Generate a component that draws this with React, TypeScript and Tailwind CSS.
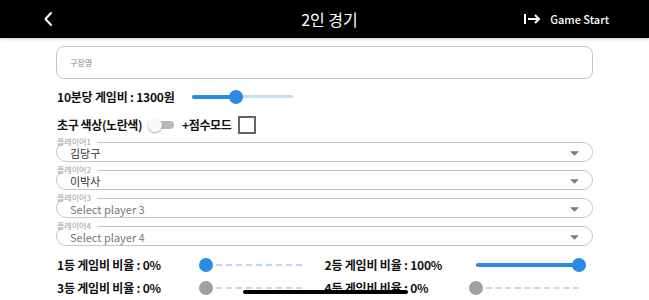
import React from 'react';

const font = { fontFamily: '"Noto Sans CJK KR", "Noto Sans", Roboto, sans-serif' };

function Slider({ value, color, track, fill }: { value: number; color: string; track: string; fill: string }) {
  return (
    <div className="relative h-[14px] w-full">
      <div className={`absolute left-[7px] right-[7px] top-[6px] border-t-2 border-dashed ${track}`} />
      <div className={`absolute left-[7px] top-[5px] h-[4px] rounded-full ${fill}`} style={{ width: `calc((100% - 14px) * ${value})` }} />
      <div className={`absolute top-0 h-[14px] w-[14px] rounded-full ${color}`} style={{ left: `calc((100% - 14px) * ${value})` }} />
    </div>
  );
}

function PlayerSelect({ label, value, placeholder }: { label: string; value: string; placeholder?: boolean }) {
  return (
    <fieldset className="rounded-[10px] border border-[#c4c4c4] pb-[1px]">
      <legend className="pr-[6px] text-[8px] leading-[8px] text-[#9a9a9a]">{label}</legend>
      <div className="mt-[1px] flex h-[13px] items-center justify-between px-[13px]">
        <span className={`text-[11px] leading-[13px] ${placeholder ? 'text-[#777]' : 'text-[#333]'}`}>{value}</span>
        <svg width="9" height="5" viewBox="0 0 10 5"><path d="M0 0 L10 0 L5 5 Z" fill="#7a7a7a" /></svg>
      </div>
    </fieldset>
  );
}

export default function App() {
  return (
    <div className="relative h-[300px] w-[649px] overflow-hidden bg-white" style={font}>
      <header className="grid h-[38px] grid-cols-[1fr_auto_1fr] items-center bg-black pl-[44px] pr-[40px] text-white shadow-[0_1px_3px_rgba(0,0,0,0.2)]">
        <svg width="9" height="16" viewBox="0 0 9 16" fill="none" stroke="white" strokeWidth="2" strokeLinecap="round" strokeLinejoin="round">
          <path d="M7 2 L1.5 8 L7 14" />
        </svg>
        <h1 className="ml-[6px] text-[16px] font-normal">2인 경기</h1>
        <div className="flex items-center justify-end gap-[9px]">
          <svg width="17" height="12" viewBox="0 0 17 12" fill="none" stroke="white" strokeWidth="2">
            <path d="M1 1 V11" />
            <path d="M4 6 H15" />
            <path d="M11 2 L15 6 L11 10" />
          </svg>
          <span className="text-[11px] font-medium">Game Start</span>
        </div>
      </header>

      <div className="px-[56px] pt-[8px]">
        <div className="flex h-[33px] items-center rounded-[8px] border border-[#c4c4c4] px-[13px]">
          <span className="text-[8px] text-[#888]">구장명</span>
        </div>

        <div className="mt-[10px] flex h-[16px] items-center">
          <span className="w-[136px] pl-[1px] text-[12px] font-bold tracking-[-0.2px] text-[#111]">10분당 게임비 : 1300원</span>
          <div className="w-[101px]">
            <div className="relative h-[14px] w-full">
              <div className="absolute left-0 right-0 top-[5px] h-[3px] rounded-full bg-[#c8dcf3]" />
              <div className="absolute left-0 top-[5px] h-[4px] w-[44px] rounded-full bg-[#2a8be6]" />
              <div className="absolute left-[37px] top-0 h-[14px] w-[14px] rounded-full bg-[#2a8be6]" />
            </div>
          </div>
        </div>

        <div className="mt-[10px] flex h-[20px] items-center">
          <span className="pl-[1px] text-[12px] font-bold tracking-[-0.4px] text-[#111]">초구 색상(노란색)</span>
          <div className="relative ml-[6px] h-[14px] w-[26px]">
            <div className="absolute left-[4px] right-0 top-[3px] h-[8px] rounded-full bg-[#b8b8b8]" />
            <div className="absolute left-0 top-0 h-[14px] w-[14px] rounded-full bg-[#fafafa] shadow-[0_1px_2px_rgba(0,0,0,0.35)]" />
          </div>
          <span className="ml-[8px] text-[12px] font-bold tracking-[-0.4px] text-[#111]">+점수모드</span>
          <div className="ml-[7px] h-[18px] w-[18px] border-2 border-[#666]" />
        </div>

        <div className="mt-[3px] flex flex-col gap-[4px]">
          <PlayerSelect label="플레이어1" value="김당구" />
          <PlayerSelect label="플레이어2" value="이박사" />
          <PlayerSelect label="플레이어3" value="Select player 3" placeholder />
          <PlayerSelect label="플레이어4" value="Select player 4" placeholder />
        </div>

        <div className="mt-[10px] grid grid-cols-2 gap-y-[5px] text-[12px] font-bold tracking-[-0.2px] text-[#111]">
          <div className="flex items-center">
            <span className="w-[143px] pl-[1px]">1등 게임비 비율 : 0%</span>
            <div className="w-[110px]"><Slider value={0} color="bg-[#2a8be6]" track="border-[#bcd8f4]" fill="bg-[#2a8be6]" /></div>
          </div>
          <div className="flex items-center">
            <span className="w-[144px]">2등 게임비 비율 : 100%</span>
            <div className="w-[117px]"><Slider value={1} color="bg-[#2a8be6]" track="border-[#1f7fd6]" fill="bg-[#2a8be6]" /></div>
          </div>
          <div className="flex items-center">
            <span className="w-[143px] pl-[1px]">3등 게임비 비율 : 0%</span>
            <div className="w-[110px]"><Slider value={0} color="bg-[#a0a0a0]" track="border-[#d4d4d4]" fill="bg-[#a0a0a0]" /></div>
          </div>
          <div className="flex items-center">
            <span className="w-[144px]">4등 게임비 비율 : 0%</span>
            <div className="w-[117px]"><Slider value={0} color="bg-[#a0a0a0]" track="border-[#e2cfd2]" fill="bg-[#a0a0a0]" /></div>
          </div>
        </div>
      </div>

      <div className="absolute bottom-[6px] left-[243px] h-[4px] w-[165px] rounded-full bg-black" />
    </div>
  );
}
